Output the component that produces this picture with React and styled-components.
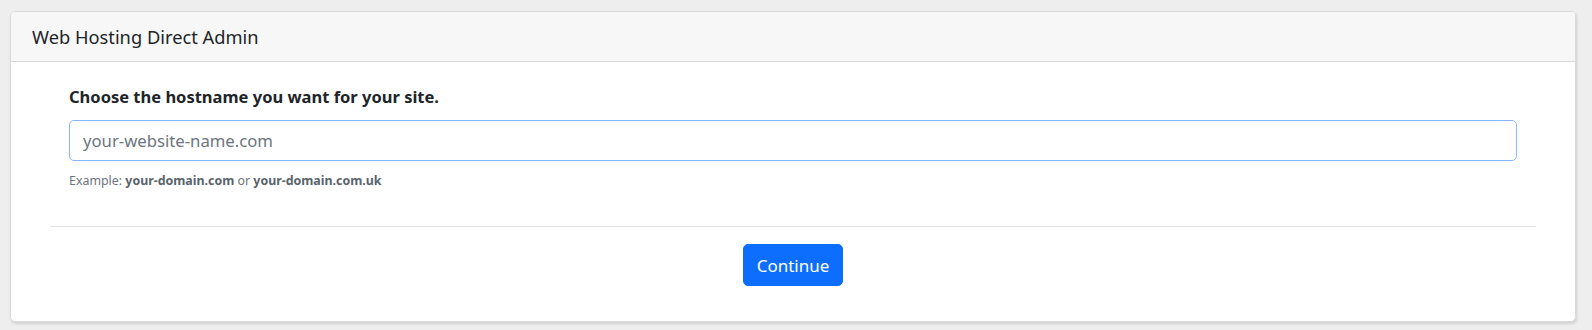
import React from "react";
import styled, { createGlobalStyle } from "styled-components";

const Global = createGlobalStyle`
  html, body { margin: 0; padding: 0; background: #eeeeee; }
  body { font-family: "Noto Sans", "Open Sans", sans-serif; color: #212529; }
  * { box-sizing: border-box; }
`;

const Page = styled.div`
  padding: 11px 16px 9px 10px;
`;

const Card = styled.div`
  background: #ffffff;
  border: 1px solid #dadada;
  border-radius: 5px;
  box-shadow: 1px 2px 3px rgba(0, 0, 0, 0.12);
  overflow: hidden;
`;

const CardHeader = styled.div`
  background: #f7f7f7;
  border-bottom: 1px solid #d9d9d9;
  height: 50px;
  display: flex;
  align-items: center;
  padding: 0 21px;
  font-size: 18.3px;
  color: #212529;
`;

const CardBody = styled.div`
  padding: 22px 39px 35px;
`;

const Form = styled.div`
  padding: 0 19px;
`;

const Label = styled.div`
  font-weight: 700;
  font-size: 16.5px;
  line-height: 26px;
  margin-bottom: 10px;
`;

const Input = styled.input`
  display: block;
  width: 100%;
  height: 41px;
  border: 1px solid #86b7fe;
  border-radius: 5px;
  padding: 0 13px;
  font-family: inherit;
  font-size: 16.7px;
  color: #212529;
  outline: none;
  &::placeholder { color: #6c757d; }
`;

const Hint = styled.div`
  margin-top: 10px;
  font-size: 12.4px;
  line-height: 20px;
  color: #6c757d;
  b { font-weight: 700; color: #5a636b; }
`;

const Divider = styled.hr`
  border: 0;
  border-top: 1px solid #e3e3e3;
  margin: 35px 0 17px;
`;

const Actions = styled.div`
  display: flex;
  justify-content: center;
`;

const Button = styled.button`
  background: #0d6efd;
  color: #ffffff;
  border: 1px solid #0d6efd;
  border-radius: 5px;
  height: 42px;
  width: 100px;
  font-family: inherit;
  font-size: 17px;
  cursor: pointer;
`;

export default function App() {
  return (
    <>
      <Global />
      <Page>
        <Card>
          <CardHeader>Web Hosting Direct Admin</CardHeader>
          <CardBody>
            <Form>
              <Label>Choose the hostname you want for your site.</Label>
              <Input placeholder="your-website-name.com" />
              <Hint>
                Example: <b>your-domain.com</b> or <b>your-domain.com.uk</b>
              </Hint>
            </Form>
            <Divider />
            <Actions>
              <Button>Continue</Button>
            </Actions>
          </CardBody>
        </Card>
      </Page>
    </>
  );
}
